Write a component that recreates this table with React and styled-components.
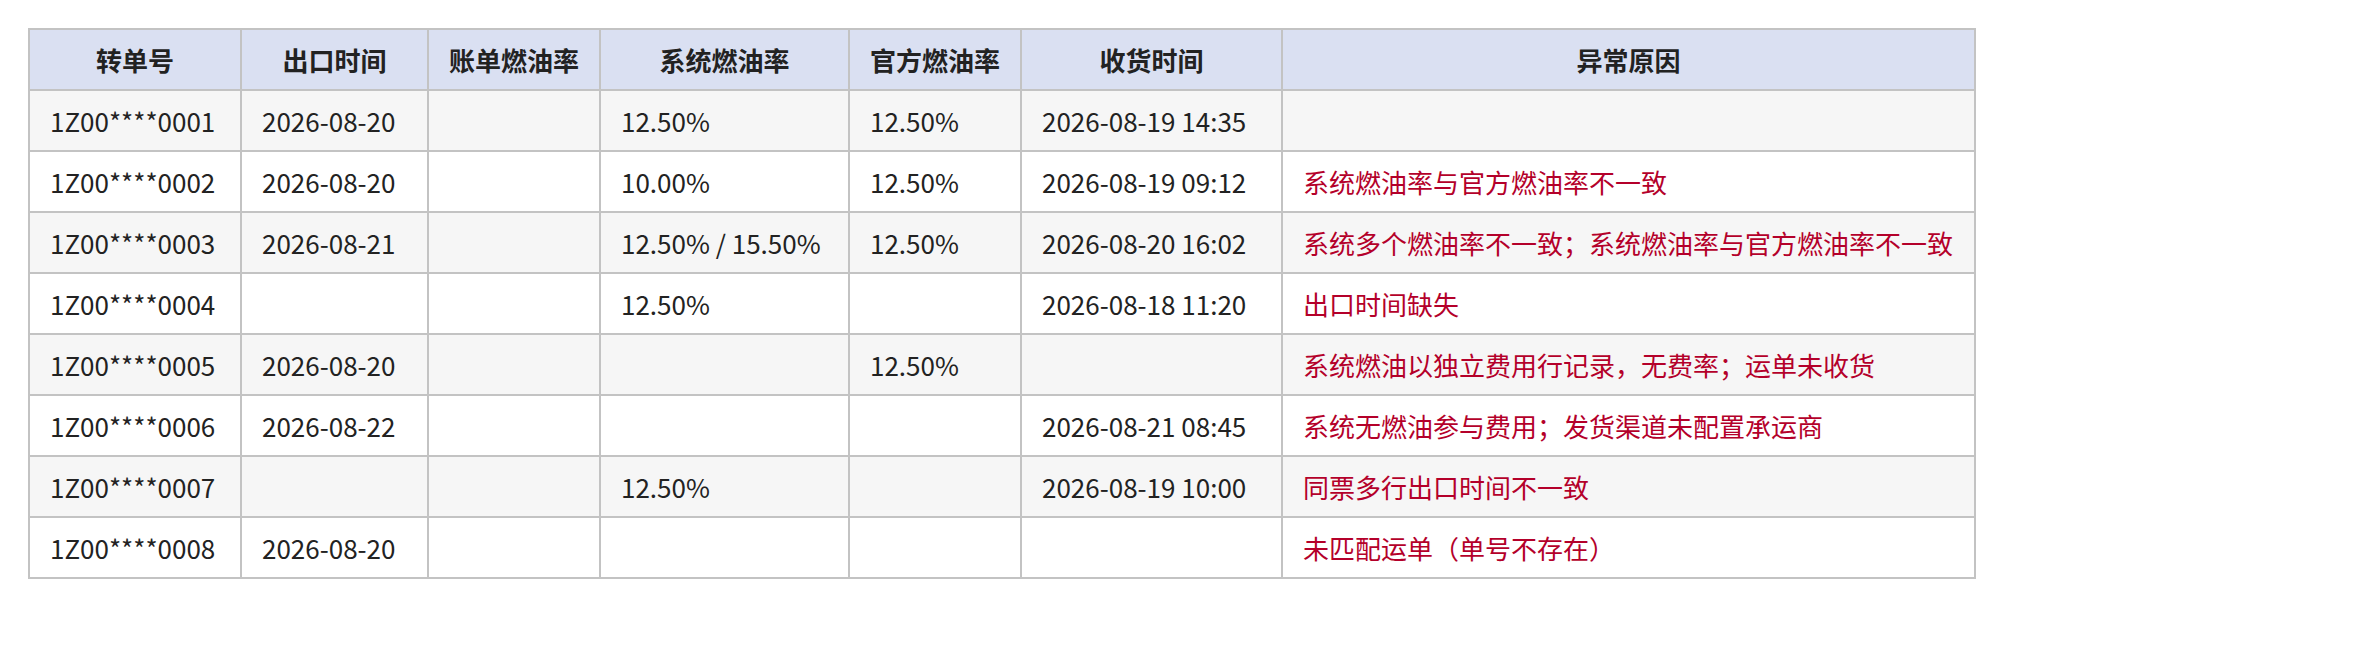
import React from "react";
import styled, { createGlobalStyle } from "styled-components";

const GlobalStyle = createGlobalStyle`
  html, body {
    margin: 0;
    padding: 0;
    background: #ffffff;
  }
  body {
    font-family: "Noto Sans CJK SC", "Noto Sans", sans-serif;
    color: #222222;
  }
`;

const Page = styled.div`
  padding: 28px 0 0 28px;
`;

const Table = styled.table`
  border-collapse: collapse;
  table-layout: fixed;
  width: 1946px;
  font-size: 26px;
  font-family: "Noto Sans CJK SC", "Noto Sans", sans-serif;
  border: 2px solid #c3c3c3;
`;

const Row = styled.tr`
  height: 61px;
  background: ${(p) => (p.$striped ? "#f6f6f6" : "#ffffff")};
`;

const HeadRow = styled.tr`
  height: 61px;
  background: #dae0f2;
`;

const HeadCell = styled.th`
  border: 2px solid #c3c3c3;
  padding: 0 18px;
  font-weight: 700;
  text-align: center;
  color: #222222;
  white-space: nowrap;
`;

const Cell = styled.td`
  border: 2px solid #c3c3c3;
  padding: 0 18px 0 20px;
  text-align: left;
  white-space: nowrap;
  color: ${(p) => (p.$alert ? "#b4002a" : "#222222")};
`;

const columns = [
  { title: "转单号", width: 212 },
  { title: "出口时间", width: 187 },
  { title: "账单燃油率", width: 172 },
  { title: "系统燃油率", width: 249 },
  { title: "官方燃油率", width: 172 },
  { title: "收货时间", width: 261 },
  { title: "异常原因", width: 693 },
];

const rows = [
  ["1Z00****0001", "2026-08-20", "", "12.50%", "12.50%", "2026-08-19 14:35", ""],
  ["1Z00****0002", "2026-08-20", "", "10.00%", "12.50%", "2026-08-19 09:12", "系统燃油率与官方燃油率不一致"],
  ["1Z00****0003", "2026-08-21", "", "12.50% / 15.50%", "12.50%", "2026-08-20 16:02", "系统多个燃油率不一致；系统燃油率与官方燃油率不一致"],
  ["1Z00****0004", "", "", "12.50%", "", "2026-08-18 11:20", "出口时间缺失"],
  ["1Z00****0005", "2026-08-20", "", "", "12.50%", "", "系统燃油以独立费用行记录，无费率；运单未收货"],
  ["1Z00****0006", "2026-08-22", "", "", "", "2026-08-21 08:45", "系统无燃油参与费用；发货渠道未配置承运商"],
  ["1Z00****0007", "", "", "12.50%", "", "2026-08-19 10:00", "同票多行出口时间不一致"],
  ["1Z00****0008", "2026-08-20", "", "", "", "", "未匹配运单（单号不存在）"],
];

export default function App() {
  return (
    <Page>
      <GlobalStyle />
      <Table>
        <colgroup>
          {columns.map((c) => (
            <col key={c.title} style={{ width: c.width }} />
          ))}
        </colgroup>
        <thead>
          <HeadRow>
            {columns.map((c) => (
              <HeadCell key={c.title}>{c.title}</HeadCell>
            ))}
          </HeadRow>
        </thead>
        <tbody>
          {rows.map((r, i) => (
            <Row key={r[0]} $striped={i % 2 === 0}>
              {r.map((v, j) => (
                <Cell key={j} $alert={j === 6}>
                  {v}
                </Cell>
              ))}
            </Row>
          ))}
        </tbody>
      </Table>
    </Page>
  );
}
